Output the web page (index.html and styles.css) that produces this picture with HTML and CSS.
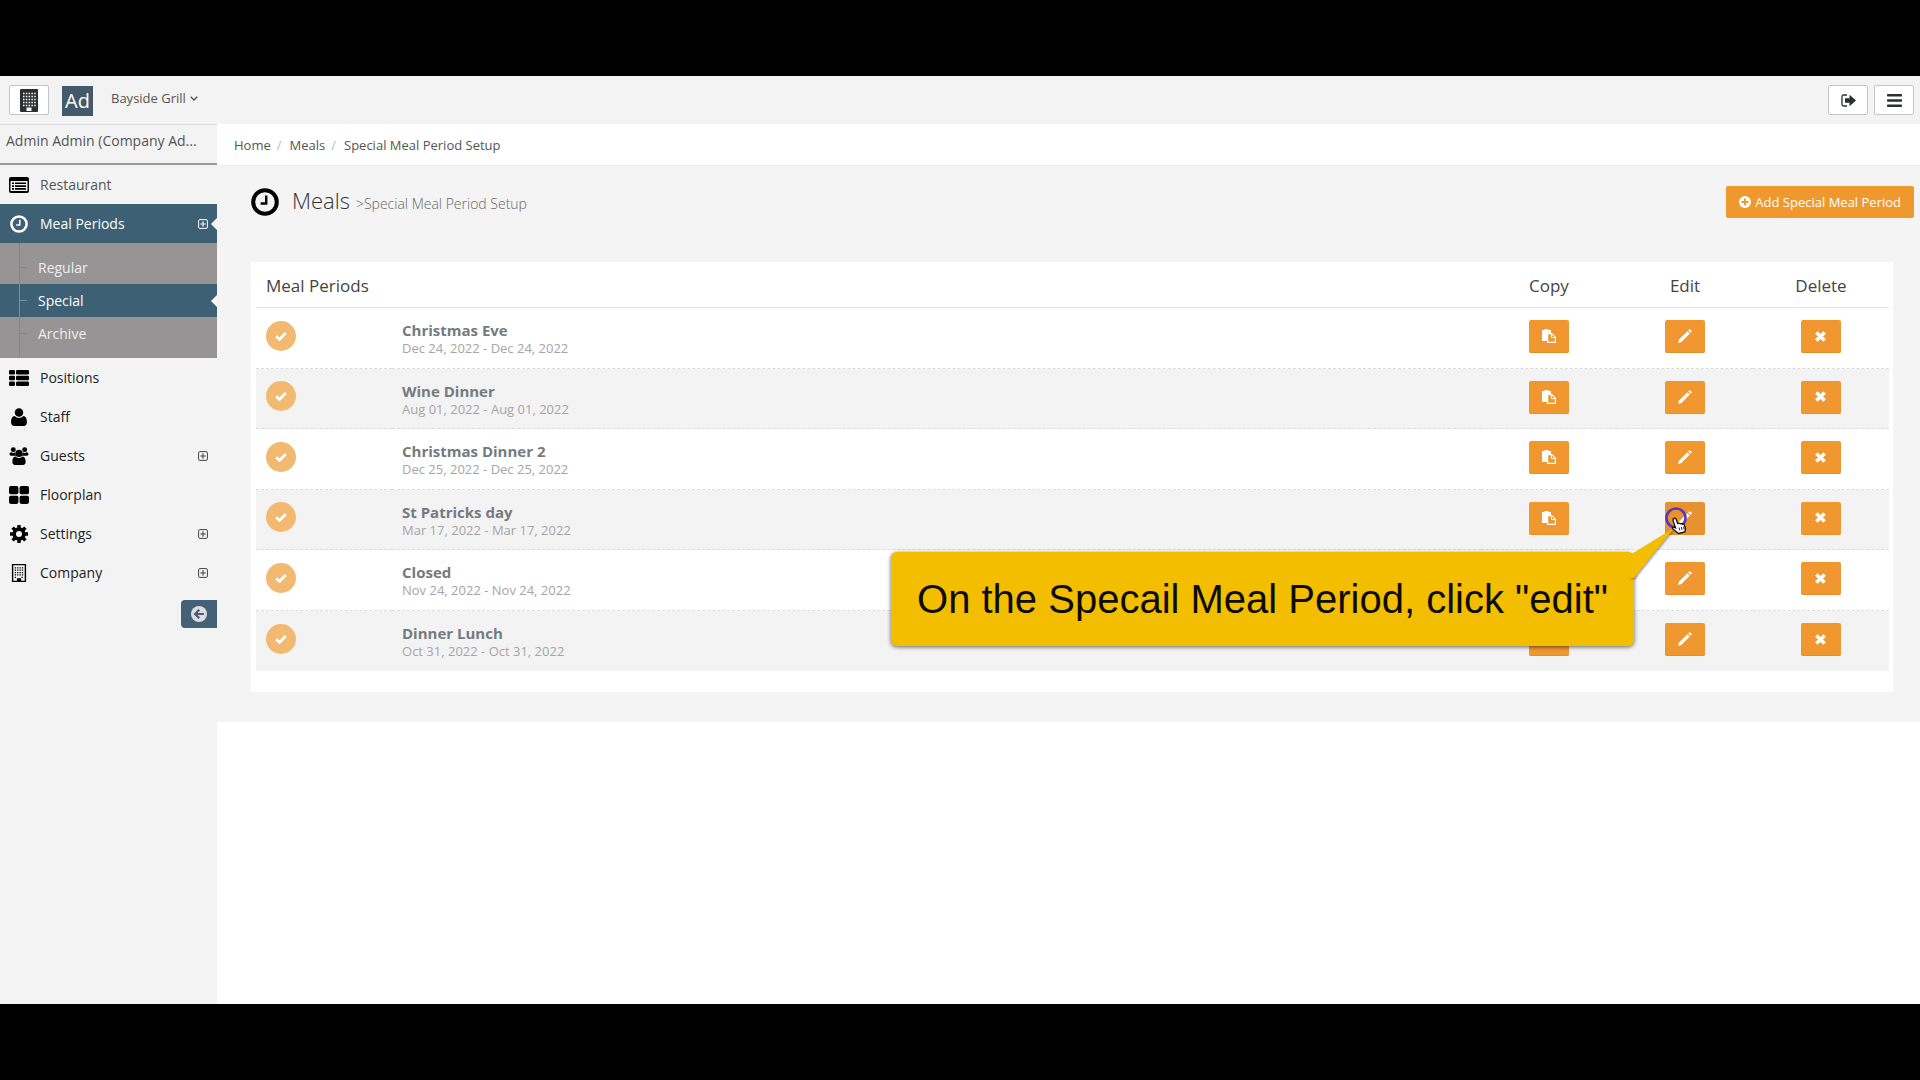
FILE: index.html
```html
<!DOCTYPE html>
<html lang="en">
<head>
    <meta charset="UTF-8">
    <meta name="viewport" content="width=device-width, initial-scale=1.0">
    <title>Special Meal Period Setup</title>
    <link rel="stylesheet" href="styles.css">
</head>
<body>
    <svg class="sprite" aria-hidden="true">
        <symbol id="i-clock" viewBox="0 0 28 28"><circle cx="14" cy="14" r="11.8" fill="none" stroke="currentColor" stroke-width="4"/><path d="M15.2 7.5v8H9.6" fill="none" stroke="currentColor" stroke-width="2.4"/></symbol>
        <symbol id="i-list-alt" viewBox="0 0 20 16"><path fill-rule="evenodd" d="M2 0h16a2 2 0 0 1 2 2v12a2 2 0 0 1-2 2H2a2 2 0 0 1-2-2V2a2 2 0 0 1 2-2zM1.5 4v10h17V4z"/><path d="M3 5.5h2v1.6H3zM6 5.5h11v1.6H6zM3 8.3h2v1.6H3zM6 8.3h11v1.6H6zM3 11.1h2v1.6H3zM6 11.1h11v1.6H6z"/></symbol>
        <symbol id="i-th-list" viewBox="0 0 20 16"><rect width="6" height="4.4" rx="1.2"/><rect x="7" width="13" height="4.4" rx="1.2"/><rect y="5.8" width="6" height="4.4" rx="1.2"/><rect x="7" y="5.8" width="13" height="4.4" rx="1.2"/><rect y="11.6" width="6" height="4.4" rx="1.2"/><rect x="7" y="11.6" width="13" height="4.4" rx="1.2"/></symbol>
        <symbol id="i-user" viewBox="0 0 16 17"><circle cx="8" cy="4.2" r="4"/><path d="M3.8 7.6A5.8 5.8 0 0 0 12.2 7.6C14.6 7.9 15.5 10.6 15.5 13.4 15.5 15.6 14.2 17 12.4 17H3.6C1.8 17 .5 15.6.5 13.4.5 10.6 1.4 7.9 3.8 7.6z"/></symbol>
        <symbol id="i-users" viewBox="0 0 20 19"><circle cx="4" cy="2.8" r="2.6"/><circle cx="16" cy="2.8" r="2.6"/><path d="M2 5.6c1.5.9 2.8.9 4 0 .1 1.6.3 2.6 1.2 3.6H2.2C.8 9.2 0 8.5 0 7.6c0-1 .8-2.1 2-2zM18 5.6c-1.5.9-2.8.9-4 0-.1 1.6-.3 2.6-1.2 3.6h5c1.4 0 2.2-.7 2.2-1.6 0-1-.8-2.1-2-2z"/><circle cx="10" cy="6.8" r="3.8"/><path d="M6.3 10a5.5 5.5 0 0 0 7.4 0c2.3.2 3.3 2.5 3.3 5.6 0 2.2-1.2 3.4-3 3.4H6c-1.8 0-3-1.2-3-3.4 0-3.1 1-5.4 3.3-5.6z"/></symbol>
        <symbol id="i-th-large" viewBox="0 0 18 16"><rect width="8.5" height="7.4" rx="1.6"/><rect x="9.5" width="8.5" height="7.4" rx="1.6"/><rect y="8.6" width="8.5" height="7.4" rx="1.6"/><rect x="9.5" y="8.6" width="8.5" height="7.4" rx="1.6"/></symbol>
        <symbol id="i-cog" viewBox="0 0 16 16"><circle cx="8" cy="8" r="4.3" fill="none" stroke="currentColor" stroke-width="3.2"/><g stroke="currentColor" stroke-width="3"><path d="M8 0v3M8 13v3M0 8h3M13 8h3M2.3 2.3l2.2 2.2M11.5 11.5l2.2 2.2M13.7 2.3l-2.2 2.2M4.5 11.5l-2.2 2.2"/></g></symbol>
        <symbol id="i-building-o" viewBox="0 0 16 19"><path fill-rule="evenodd" d="M.5 0h15v19H.5zM2 1.4v16.2h3.8V15h4.4v2.6H14V1.4z"/><path d="M3.5 4h9M3.5 6.5h9M3.5 9h9M3.5 11.5h9M3.5 14h2M10.5 14h2" fill="none" stroke="currentColor" stroke-width="1.3" stroke-dasharray="1.4 1.1"/></symbol>
        <symbol id="i-building" viewBox="0 0 18 23"><rect width="18" height="23" rx="1"/><path d="M3 4.5h13M3 7.5h13M3 10.5h13M3 13.5h13M3 16.5h13" stroke="#fff" stroke-width="1.5" stroke-dasharray="1.5 1.3"/><path d="M6.5 18.5h5V22h-5z" fill="#fff"/></symbol>
        <symbol id="i-plus-square" viewBox="0 0 10 10"><rect x=".6" y=".6" width="8.8" height="8.8" rx="1.2" fill="none" stroke="currentColor" stroke-width="1"/><path d="M5 2.3v5.4M2.3 5h5.4" stroke="currentColor" stroke-width="1.1"/></symbol>
        <symbol id="i-arrow-left" viewBox="0 0 16 16"><circle cx="8" cy="8" r="8"/><path d="M13 8H4.5M8.3 3.8L4.1 8l4.2 4.2" fill="none" stroke="#446277" stroke-width="2.2"/></symbol>
        <symbol id="i-angle-down" viewBox="0 0 8 5"><path d="M.7.7L4 4 7.3.7" fill="none" stroke="currentColor" stroke-width="1.4"/></symbol>
        <symbol id="i-sign-out" viewBox="0 0 15 13"><path d="M6 1H2.5Q1 1 1 2.5v8Q1 12 2.5 12H6" fill="none" stroke="currentColor" stroke-width="1.3"/><path d="M4 4.2h4.5V.8L15 6.5 8.5 12.2V8.8H4z"/></symbol>
        <symbol id="i-bars" viewBox="0 0 15 13"><rect width="15" height="2.6" rx=".8"/><rect y="5.2" width="15" height="2.6" rx=".8"/><rect y="10.4" width="15" height="2.6" rx=".8"/></symbol>
        <symbol id="i-plus-circle" viewBox="0 0 12 12"><circle cx="6" cy="6" r="6"/><path d="M6 2.5v7M2.5 6h7" stroke="#ee982e" stroke-width="1.9"/></symbol>
        <symbol id="i-check" viewBox="0 0 12 10"><path d="M1.2 5.2l3.3 3.2L10.8 2" fill="none" stroke="currentColor" stroke-width="2.8"/></symbol>
        <symbol id="i-paste" viewBox="0 0 14 14"><path d="M0 1h2.500V0h4v1H9v3H5v8H0z"/><path d="M5.600 4.600h4.200l3.600 3.600v5.200H5.600z" fill="#f0982f" stroke="currentColor" stroke-width="1.200"/><path d="M9.500 4.600v4h4" fill="none" stroke="currentColor"/></symbol>
        <symbol id="i-pencil" viewBox="0 0 14 14"><path d="M0 14l1-3.400L9.400 2.200l2.400 2.400L3.400 13zM10.200 1.400l1-1q.5-.4 1 0l1.400 1.400q.4.500 0 1l-1 1z"/></symbol>
        <symbol id="i-times" viewBox="0 0 11 11"><path d="M1.4 1.4l8.2 8.2M9.6 1.4L1.4 9.6" stroke="currentColor" stroke-width="3.6"/></symbol>
    </svg>

    <div class="app">
        <header class="topbar">
            <button class="btn-default" type="button" aria-label="Company"><svg class="ic-building"><use href="#i-building"/></svg></button>
            <span class="logo">Ad</span>
            <button class="project" type="button">Bayside Grill <svg class="ic-angle"><use href="#i-angle-down"/></svg></button>
            <div class="topbar-right">
                <button class="btn-default" type="button" aria-label="Sign out"><svg class="ic-top"><use href="#i-sign-out"/></svg></button>
                <button class="btn-default" type="button" aria-label="Menu"><svg class="ic-top"><use href="#i-bars"/></svg></button>
            </div>
        </header>

        <div class="body">
            <aside class="sidebar">
                <div class="login-info">Admin Admin (Company Ad...</div>
                <nav>
                    <ul class="menu">
                        <li><a class="muted" href="#"><svg><use href="#i-list-alt"/></svg>Restaurant</a></li>
                        <li>
                            <a class="active" href="#"><svg><use href="#i-clock"/></svg>Meal Periods<svg class="expand"><use href="#i-plus-square"/></svg></a>
                            <ul class="submenu">
                                <li><a href="#">Regular</a></li>
                                <li><a class="active" href="#">Special</a></li>
                                <li><a href="#">Archive</a></li>
                            </ul>
                        </li>
                        <li><a href="#"><svg><use href="#i-th-list"/></svg>Positions</a></li>
                        <li><a href="#"><svg><use href="#i-user"/></svg>Staff</a></li>
                        <li><a href="#"><svg><use href="#i-users"/></svg>Guests<svg class="expand"><use href="#i-plus-square"/></svg></a></li>
                        <li><a href="#"><svg><use href="#i-th-large"/></svg>Floorplan</a></li>
                        <li><a href="#"><svg><use href="#i-cog"/></svg>Settings<svg class="expand"><use href="#i-plus-square"/></svg></a></li>
                        <li><a href="#"><svg><use href="#i-building-o"/></svg>Company<svg class="expand"><use href="#i-plus-square"/></svg></a></li>
                    </ul>
                </nav>
                <button class="minify" type="button" aria-label="Collapse menu"><svg><use href="#i-arrow-left"/></svg></button>
            </aside>

            <main class="main">
                <ol class="breadcrumb">
                    <li><a href="#">Home</a></li>
                    <li><a href="#">Meals</a></li>
                    <li>Special Meal Period Setup</li>
                </ol>

                <div class="content">
                    <div class="page-head">
                        <h1><svg><use href="#i-clock"/></svg>Meals <small>&gt;Special Meal Period Setup</small></h1>
                        <button class="btn-add" type="button"><svg><use href="#i-plus-circle"/></svg>Add Special Meal Period</button>
                    </div>

                    <div class="card">
                        <table class="periods">
                            <thead>
                                <tr>
                                    <th class="col-icon">Meal Periods</th>
                                    <th></th>
                                    <th class="col-action">Copy</th>
                                    <th class="col-action">Edit</th>
                                    <th class="col-action">Delete</th>
                                </tr>
                            </thead>
                            <tbody>
                                <tr>
                                    <td><span class="status"><svg><use href="#i-check"/></svg></span></td>
                                    <td><strong>Christmas Eve</strong><span class="dates">Dec 24, 2022 - Dec 24, 2022</span></td>
                                    <td><button class="btn" type="button" aria-label="Copy"><svg><use href="#i-paste"/></svg></button></td>
                                    <td><button class="btn" type="button" aria-label="Edit"><svg><use href="#i-pencil"/></svg></button></td>
                                    <td><button class="btn" type="button" aria-label="Delete"><svg class="small"><use href="#i-times"/></svg></button></td>
                                </tr>
                                <tr>
                                    <td><span class="status"><svg><use href="#i-check"/></svg></span></td>
                                    <td><strong>Wine Dinner</strong><span class="dates">Aug 01, 2022 - Aug 01, 2022</span></td>
                                    <td><button class="btn" type="button" aria-label="Copy"><svg><use href="#i-paste"/></svg></button></td>
                                    <td><button class="btn" type="button" aria-label="Edit"><svg><use href="#i-pencil"/></svg></button></td>
                                    <td><button class="btn" type="button" aria-label="Delete"><svg class="small"><use href="#i-times"/></svg></button></td>
                                </tr>
                                <tr>
                                    <td><span class="status"><svg><use href="#i-check"/></svg></span></td>
                                    <td><strong>Christmas Dinner 2</strong><span class="dates">Dec 25, 2022 - Dec 25, 2022</span></td>
                                    <td><button class="btn" type="button" aria-label="Copy"><svg><use href="#i-paste"/></svg></button></td>
                                    <td><button class="btn" type="button" aria-label="Edit"><svg><use href="#i-pencil"/></svg></button></td>
                                    <td><button class="btn" type="button" aria-label="Delete"><svg class="small"><use href="#i-times"/></svg></button></td>
                                </tr>
                                <tr>
                                    <td><span class="status"><svg><use href="#i-check"/></svg></span></td>
                                    <td><strong>St Patricks day</strong><span class="dates">Mar 17, 2022 - Mar 17, 2022</span></td>
                                    <td><button class="btn" type="button" aria-label="Copy"><svg><use href="#i-paste"/></svg></button></td>
                                    <td>
                                        <div class="target">
                                            <button class="btn pressed" type="button" aria-label="Edit"><svg><use href="#i-pencil"/></svg></button>
                                            <div class="callout">On the Specail Meal Period, click "edit"
                                                <svg class="tail" viewBox="0 0 46 52"><path d="M0 27L44 0 4 50H0z" fill="#f3be00"/></svg>
                                            </div>
                                            <svg class="pointer" viewBox="0 0 34 32">
                                                <circle cx="12" cy="12" r="9.5" fill="none" stroke="#5a37b4" stroke-width="2.6"/>
                                                <path d="M9.500 12.500q1.600-1 2.600.8l1.600 4.200q1.500-.9 2.500.3 1.300-.8 2.300.5 1.500-.6 2 .9l1 3.300-.6 3.500-6.400 1.500-5.900-4.800q-.6-1.400 1-1.500l2 .7-2.700-7.800z" fill="#fff" stroke="#111" stroke-width="1.300"/>
                                                <path d="M15 21.500l.8 3M17.300 21l.8 3M19.500 20.500l.7 3" stroke="#111" stroke-width=".9"/>
                                            </svg>
                                        </div>
                                    </td>
                                    <td><button class="btn" type="button" aria-label="Delete"><svg class="small"><use href="#i-times"/></svg></button></td>
                                </tr>
                                <tr>
                                    <td><span class="status"><svg><use href="#i-check"/></svg></span></td>
                                    <td><strong>Closed</strong><span class="dates">Nov 24, 2022 - Nov 24, 2022</span></td>
                                    <td><button class="btn" type="button" aria-label="Copy"><svg><use href="#i-paste"/></svg></button></td>
                                    <td><button class="btn" type="button" aria-label="Edit"><svg><use href="#i-pencil"/></svg></button></td>
                                    <td><button class="btn" type="button" aria-label="Delete"><svg class="small"><use href="#i-times"/></svg></button></td>
                                </tr>
                                <tr>
                                    <td><span class="status"><svg><use href="#i-check"/></svg></span></td>
                                    <td><strong>Dinner Lunch</strong><span class="dates">Oct 31, 2022 - Oct 31, 2022</span></td>
                                    <td><button class="btn" type="button" aria-label="Copy"><svg><use href="#i-paste"/></svg></button></td>
                                    <td><button class="btn" type="button" aria-label="Edit"><svg><use href="#i-pencil"/></svg></button></td>
                                    <td><button class="btn" type="button" aria-label="Delete"><svg class="small"><use href="#i-times"/></svg></button></td>
                                </tr>
                            </tbody>
                        </table>
                    </div>
                </div>
            </main>
        </div>
    </div>
</body>
</html>
```

FILE: styles.css
```css
* {
    margin: 0;
    padding: 0;
    box-sizing: border-box;
}

body {
    font-family: 'Open Sans', 'Noto Sans', sans-serif;
    font-size: 14px;
    color: #333;
    background: #000;
    min-height: 100vh;
    padding: 76px 0;
    display: flex;
    flex-direction: column;
}

button {
    font-family: inherit;
    cursor: pointer;
}

a {
    color: inherit;
    text-decoration: none;
}

ul, ol {
    list-style: none;
}

svg {
    fill: currentColor;
    flex: none;
}

.sprite {
    position: absolute;
    width: 0;
    height: 0;
}

.app {
    flex: 1;
    display: flex;
    flex-direction: column;
    background: #fff;
}

/* top bar */
.topbar {
    display: flex;
    align-items: center;
    height: 48px;
    padding: 0 6px 0 9px;
    background: #f3f3f3;
}

.btn-default {
    display: flex;
    align-items: center;
    justify-content: center;
    width: 40px;
    height: 30px;
    background: #fff;
    border: 1px solid #c4c4c4;
    border-radius: 2px;
    color: #2b2f31;
}

.logo {
    width: 31px;
    height: 30px;
    margin: 2px 18px 0 13px;
    background: #44596a;
    color: #fff;
    font-size: 20px;
    font-weight: 500;
    line-height: 30px;
    text-align: center;
}

.project {
    display: flex;
    align-items: center;
    gap: 4px;
    margin-bottom: 4px;
    background: none;
    border: 0;
    font-size: 13px;
    color: #555;
}

.topbar-right {
    display: flex;
    gap: 6px;
    margin-left: auto;
}

.ic-building {
    width: 18px;
    height: 23px;
}

.ic-angle {
    width: 8px;
    height: 5px;
}

.ic-top {
    width: 15px;
    height: 13px;
}

.body {
    flex: 1;
    display: flex;
}

/* sidebar */
.sidebar {
    width: 217px;
    flex: none;
    background: #f3f3f3;
    border-top: 1px solid #dcdcdc;
}

.login-info {
    height: 40px;
    padding-left: 6px;
    border-bottom: 2px solid #999;
    line-height: 32px;
    color: #555;
    white-space: nowrap;
}

.menu > li > a {
    position: relative;
    display: flex;
    align-items: center;
    gap: 11px;
    height: 39px;
    padding: 0 9px;
    color: #222;
}

.menu svg {
    width: 20px;
    height: 18px;
    color: #000;
}

.menu > li > a.muted {
    color: #555;
}

.menu > li > a.active,
.menu > li > a.active svg {
    background: #3d6075;
    color: #fff;
}

.menu > li > a.active {
    font-weight: 500;
}

.menu svg.expand {
    width: 10px;
    height: 10px;
    margin-left: auto;
    color: #444;
}

.active::after {
    content: "";
    position: absolute;
    right: 0;
    border: 6px solid transparent;
    border-left: 0;
    border-right-color: #f8f8f8;
}

.submenu {
    padding: 8px 0;
    background: linear-gradient(90deg, transparent 19px, #868383 19px, #868383 20px, transparent 20px) #969494;
}

.submenu a {
    position: relative;
    display: flex;
    align-items: center;
    height: 33px;
    padding-left: 38px;
    color: #eee;
}

.submenu a::before {
    content: "";
    position: absolute;
    left: 19px;
    width: 8px;
    height: 1px;
    background: #868383;
}

.submenu a.active {
    background: linear-gradient(90deg, transparent 19px, #6f93a6 19px, #6f93a6 20px, transparent 20px) #3d6075;
    color: #fff;
    font-weight: 500;
}

.submenu a.active::before {
    background: #6f93a6;
}

.minify {
    display: flex;
    align-items: center;
    justify-content: center;
    width: 36px;
    height: 28px;
    margin: 8px 0 0 auto;
    background: #446277;
    border: 0;
    border-radius: 4px 0 0 4px;
    color: #ddd;
}

.minify svg {
    width: 16px;
    height: 16px;
}

/* main column */
.main {
    flex: 1;
    min-width: 0;
}

.breadcrumb {
    display: flex;
    align-items: center;
    height: 41px;
    padding-left: 17px;
    font-size: 13px;
    color: #555;
}

.breadcrumb li + li::before {
    content: "/";
    padding: 0 8px 0 6px;
    color: #bbb;
}

.content {
    padding: 20px 27px 30px 34px;
    background: #f4f4f4;
    border-top: 1px solid #ececec;
}

.page-head {
    display: flex;
    align-items: flex-start;
    justify-content: space-between;
    height: 76px;
    margin-right: -21px;
}

h1 {
    display: flex;
    align-items: baseline;
    font-size: 22px;
    font-weight: 300;
    line-height: 28px;
    color: #333;
}

h1 svg {
    width: 28px;
    height: 28px;
    margin-right: 13px;
    align-self: center;
    color: #000;
}

h1 small {
    margin-left: 6px;
    font-size: 14px;
    color: #666;
}

.btn-add {
    display: flex;
    align-items: center;
    gap: 4px;
    height: 32px;
    padding: 0 13px;
    background: #ee982e;
    border: 0;
    border-radius: 2px;
    font-size: 13px;
    font-weight: 500;
    color: #fff;
}

.btn-add svg {
    width: 12px;
    height: 12px;
}

.card {
    padding: 0 4px 21px 5px;
    background: #fff;
}

.periods {
    width: 100%;
    table-layout: fixed;
    border-collapse: separate;
    border-spacing: 0;
}

.periods th,
.periods td {
    padding: 0 10px;
    vertical-align: middle;
}

.periods th {
    height: 46px;
    padding-top: 2px;
    border-bottom: 1px solid #e6e6e6;
    font-size: 17px;
    font-weight: 400;
    text-align: left;
    white-space: nowrap;
    color: #444;
}

.periods .col-icon,
.periods .col-action {
    width: 8.33%;
}

.periods .col-action {
    text-align: center;
}

.periods td {
    height: 61px;
    border-bottom: 1px dashed #dcdcdc;
}

.periods tr:nth-child(even) td {
    height: 60px;
    background: #f4f3f4;
}

.periods tr:last-child td {
    border-bottom: 0;
}

.periods strong,
.dates {
    display: block;
    line-height: 18px;
}

.periods strong {
    padding-top: 2px;
    font-size: 15px;
    font-weight: 700;
    color: #737b80;
}

.dates {
    font-size: 13px;
    color: #a5a5a5;
}

.status {
    display: flex;
    align-items: center;
    justify-content: center;
    width: 30px;
    height: 30px;
    margin-bottom: 5px;
    border-radius: 50%;
    background: #f2b971;
    color: #fff;
}

.status svg {
    width: 12px;
    height: 10px;
}

.btn {
    display: flex;
    align-items: center;
    justify-content: center;
    width: 40px;
    height: 33px;
    margin: 0 auto 3px;
    background: #f0982f;
    border: 0;
    border-bottom: 1px solid #e48f28;
    border-radius: 2px;
    color: #fff;
}

.btn svg {
    width: 14px;
    height: 14px;
}

.btn svg.small {
    width: 11px;
    height: 11px;
}

.pressed {
    background: #e8922f;
}

/* tutorial overlay */
.target {
    position: relative;
    width: 40px;
    margin: 0 auto;
}

.callout {
    position: absolute;
    z-index: 2;
    top: 50px;
    right: 71px;
    padding: 0 26px;
    background: #f3be00;
    border-radius: 6px;
    box-shadow: 0 1px 4px rgba(0,0,0,0.6);
    font-family: 'Liberation Sans', Arial, sans-serif;
    font-size: 40px;
    line-height: 94px;
    white-space: nowrap;
    color: #0c0c00;
}

.tail {
    position: absolute;
    top: -24px;
    right: -42px;
    width: 46px;
    height: 52px;
    filter: drop-shadow(1px 1px 1px rgba(0,0,0,0.4));
}

.pointer {
    position: absolute;
    z-index: 3;
    top: 4px;
    left: -1px;
    width: 34px;
    height: 32px;
}
```
